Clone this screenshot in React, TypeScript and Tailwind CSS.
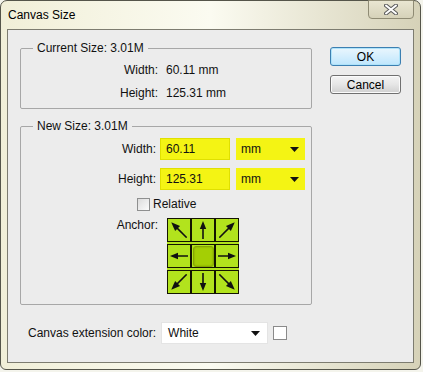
import React from "react";

const font = { fontFamily: '"Liberation Sans", Arial, sans-serif' };

function Arrow({ angle }: { angle: number }) {
  // arrow pointing up, rotated
  const diag = angle % 90 !== 0;
  return (
    <svg width="22" height="22" viewBox="0 0 22 22" style={{ transform: `rotate(${angle}deg)` }}>
      <line x1="11" y1={diag ? 22 : 20} x2="11" y2="7" stroke="#111" strokeWidth="1.6" />
      <polygon points={diag ? "11,0 7.5,9 14.5,9" : "11,2 7.8,10 14.2,10"} fill="#111" />
    </svg>
  );
}

function Caret() {
  return (
    <svg width="9" height="5" viewBox="0 0 9 5">
      <polygon points="0,0 9,0 4.5,5" fill="#111" />
    </svg>
  );
}

const arrows: (number | null)[] = [-45, 0, 45, -90, null, 90, -135, 180, 135];

export default function App() {
  return (
    <div className="w-[423px] h-[372px] bg-[#f4f4ec] text-[12px] text-[#111]" style={font}>
      <div className="relative w-[421px] h-[370px] rounded-t-[7px] rounded-b-[6px] border border-[#55554a] bg-gradient-to-r from-[#f1efd8] via-[#fbfbf1] to-[#d6d2b8] flex flex-col px-[6px] pb-[6px]">
        {/* title bar */}
        <div className="h-[28px] flex items-center pl-[1px] text-[12px] text-black">Canvas Size</div>
        <div className="absolute right-[6px] top-[-1px] w-[46px] h-[19px] rounded-b-[4px] border border-[#8f8b74] bg-gradient-to-b from-[#e9e6d2] to-[#d6d2b9] flex items-center justify-center">
          <svg width="14" height="11" viewBox="0 0 14 11">
            <path d="M2 1.5 L12 9.5 M12 1.5 L2 9.5" stroke="#5c5c5c" strokeWidth="4" strokeLinecap="round" />
            <path d="M2 1.5 L12 9.5 M12 1.5 L2 9.5" stroke="#ffffff" strokeWidth="2" strokeLinecap="round" />
          </svg>
        </div>

        {/* client area */}
        <div className="flex-1 border border-[#7d7c70] bg-[#ececec] flex pl-[12px] pt-[11px]">
          <div className="w-[292px] flex flex-col">
            <fieldset className="h-[68px] border border-[#a7a7a7] rounded-[2px] px-0">
              <legend className="ml-[12px] px-[4px] leading-[15px]">Current Size: 3.01M</legend>
              <div className="flex flex-col gap-[8px] pt-[7px]">
                <div className="flex leading-[15px]">
                  <span className="w-[137px] text-right">Width:</span>
                  <span className="ml-[8px]">60.11 mm</span>
                </div>
                <div className="flex leading-[15px]">
                  <span className="w-[137px] text-right">Height:</span>
                  <span className="ml-[8px]">125.31 mm</span>
                </div>
              </div>
            </fieldset>

            <fieldset className="mt-[10px] h-[186px] border border-[#a7a7a7] rounded-[2px] px-0">
              <legend className="ml-[12px] px-[4px] leading-[15px]">New Size: 3.01M</legend>
              <div className="flex flex-col pt-[4px]">
                <div className="flex items-center h-[22px]">
                  <span className="w-[135px] text-right">Width:</span>
                  <div className="ml-[4px] w-[70px] h-[22px] bg-[#f4f414] border border-[#e0e000] flex items-center pl-[5px]">60.11</div>
                  <div className="ml-[6px] w-[69px] h-[22px] bg-[#f4f414] flex items-center justify-between pl-[5px] pr-[6px]">
                    <span>mm</span>
                    <Caret />
                  </div>
                </div>
                <div className="flex items-center h-[22px] mt-[8px]">
                  <span className="w-[135px] text-right">Height:</span>
                  <div className="ml-[4px] w-[70px] h-[22px] bg-[#f4f414] border border-[#e0e000] flex items-center pl-[5px]">125.31</div>
                  <div className="ml-[6px] w-[69px] h-[22px] bg-[#f4f414] flex items-center justify-between pl-[5px] pr-[6px]">
                    <span>mm</span>
                    <Caret />
                  </div>
                </div>
                <div className="flex items-center mt-[7px] ml-[116px] h-[14px]">
                  <div className="w-[13px] h-[13px] border border-[#8e8f8f] bg-gradient-to-br from-[#dcdcdc] to-[#fbfbfb]" />
                  <span className="ml-[3px]">Relative</span>
                </div>
                <div className="flex mt-[7px]">
                  <span className="w-[137px] text-right leading-[15px]">Anchor:</span>
                  <div className="ml-[9px] w-[72px] grid grid-cols-3 gap-y-[2px] bg-[#b2e31d]">
                    {arrows.map((a, i) => (
                      <div key={i} className="w-[24px] h-[24px] border-[1.5px] border-[#141400] bg-[#b2e31d] flex items-center justify-center overflow-hidden">
                        {a === null ? (
                          <div className="w-[21px] h-[21px] rounded-[3px] bg-[#a4cf04] border border-[#86a800] shadow-[inset_0_0_2px_#7a9a00]" />
                        ) : (
                          <Arrow angle={a} />
                        )}
                      </div>
                    ))}
                  </div>
                </div>
              </div>
            </fieldset>

            <div className="flex items-center mt-[17px] ml-[8px] h-[22px]">
              <span>Canvas extension color:</span>
              <div className="ml-[5px] w-[107px] h-[22px] bg-white border border-[#e4e4e4] flex items-center justify-between pl-[6px] pr-[7px]">
                <span>White</span>
                <Caret />
              </div>
              <div className="ml-[5px] w-[14px] h-[14px] border border-[#8a8a8a] bg-white" />
            </div>
          </div>

          <div className="ml-[18px] mt-[6px] flex flex-col gap-[9px]">
            <button className="w-[71px] h-[19px] rounded-[3px] border border-[#3c7fb1] bg-gradient-to-b from-[#eaf6fd] to-[#bee6fd] shadow-[inset_0_0_0_1px_#aee3fa] text-[12px] leading-none text-black">OK</button>
            <button className="w-[71px] h-[19px] rounded-[3px] border border-[#707070] bg-gradient-to-b from-[#f4f4f4] via-[#e6e6e6] to-[#d0d0d0] shadow-[inset_0_0_0_1px_#fbfbfb] text-[12px] leading-none text-black">Cancel</button>
          </div>
        </div>
      </div>
    </div>
  );
}
